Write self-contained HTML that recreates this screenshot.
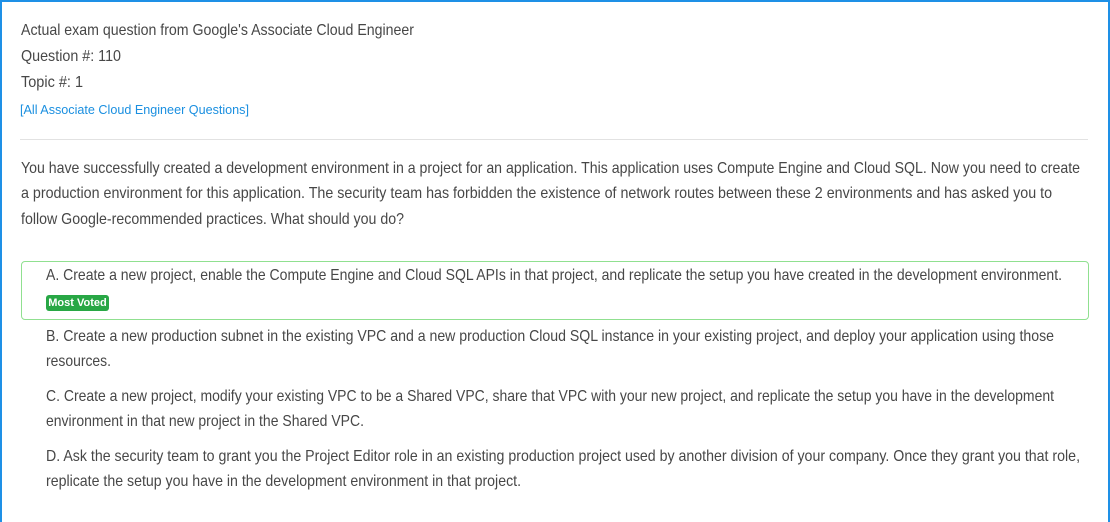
<!DOCTYPE html>
<html><head><meta charset="utf-8"><style>
body{margin:0;width:1110px;height:514px;overflow:hidden;background:#fff;font-family:"Liberation Sans",Arial,sans-serif;color:#474747}
.frame{position:absolute;left:0;top:0;width:1106px;height:520px;border:2px solid #1e90e6;border-bottom:none}
.l{position:absolute;white-space:nowrap;font-size:16px;line-height:18px;transform-origin:0 50%}
.lk{color:#1a8fe0;font-size:13px}
.hr{position:absolute;left:20px;top:139px;width:1068px;height:1px;background:#e2e2e2}
.box{position:absolute;left:21px;top:261px;width:1066px;height:57px;border:1px solid #90e090;border-radius:4px}
.badge{position:absolute;left:46px;top:295px;width:63px;height:16px;background:#28a745;border-radius:3px;color:#fff;font-weight:bold;font-size:11px;line-height:16px;text-align:center}
</style></head><body>
<div class="frame"></div>
<div class="l" data-w="393" style="left:21px;top:22px">Actual exam question from Google's Associate Cloud Engineer</div>
<div class="l" data-w="100" style="left:21px;top:48px">Question #: 110</div>
<div class="l" data-w="62" style="left:21px;top:74px">Topic #: 1</div>
<div class="l lk" data-w="229" style="left:20px;top:101px">[All Associate Cloud Engineer Questions]</div>
<div class="hr"></div>
<div class="l" data-w="1059" style="left:21px;top:160px">You have successfully created a development environment in a project for an application. This application uses Compute Engine and Cloud SQL. Now you need to create</div>
<div class="l" data-w="1031" style="left:21px;top:185px">a production environment for this application. The security team has forbidden the existence of network routes between these 2 environments and has asked you to</div>
<div class="l" data-w="383" style="left:21px;top:211px">follow Google-recommended practices. What should you do?</div>
<div class="box"></div>
<div class="l" data-w="1016" style="left:46px;top:267px">A. Create a new project, enable the Compute Engine and Cloud SQL APIs in that project, and replicate the setup you have created in the development environment.</div>
<div class="badge">Most Voted</div>
<div class="l" data-w="1008" style="left:46px;top:328px">B. Create a new production subnet in the existing VPC and a new production Cloud SQL instance in your existing project, and deploy your application using those</div>
<div class="l" data-w="65" style="left:46px;top:353px">resources.</div>
<div class="l" data-w="1008" style="left:46px;top:388px">C. Create a new project, modify your existing VPC to be a Shared VPC, share that VPC with your new project, and replicate the setup you have in the development</div>
<div class="l" data-w="318" style="left:46px;top:413px">environment in that new project in the Shared VPC.</div>
<div class="l" data-w="1034" style="left:46px;top:448px">D. Ask the security team to grant you the Project Editor role in an existing production project used by another division of your company. Once they grant you that role,</div>
<div class="l" data-w="475" style="left:46px;top:473px">replicate the setup you have in the development environment in that project.</div>
<script>
document.querySelectorAll('.l').forEach(function(e){var w=e.getBoundingClientRect().width;var t=+e.dataset.w;if(w&&t)e.style.transform='scaleX('+(t/w)+')';});
</script>
</body></html>
